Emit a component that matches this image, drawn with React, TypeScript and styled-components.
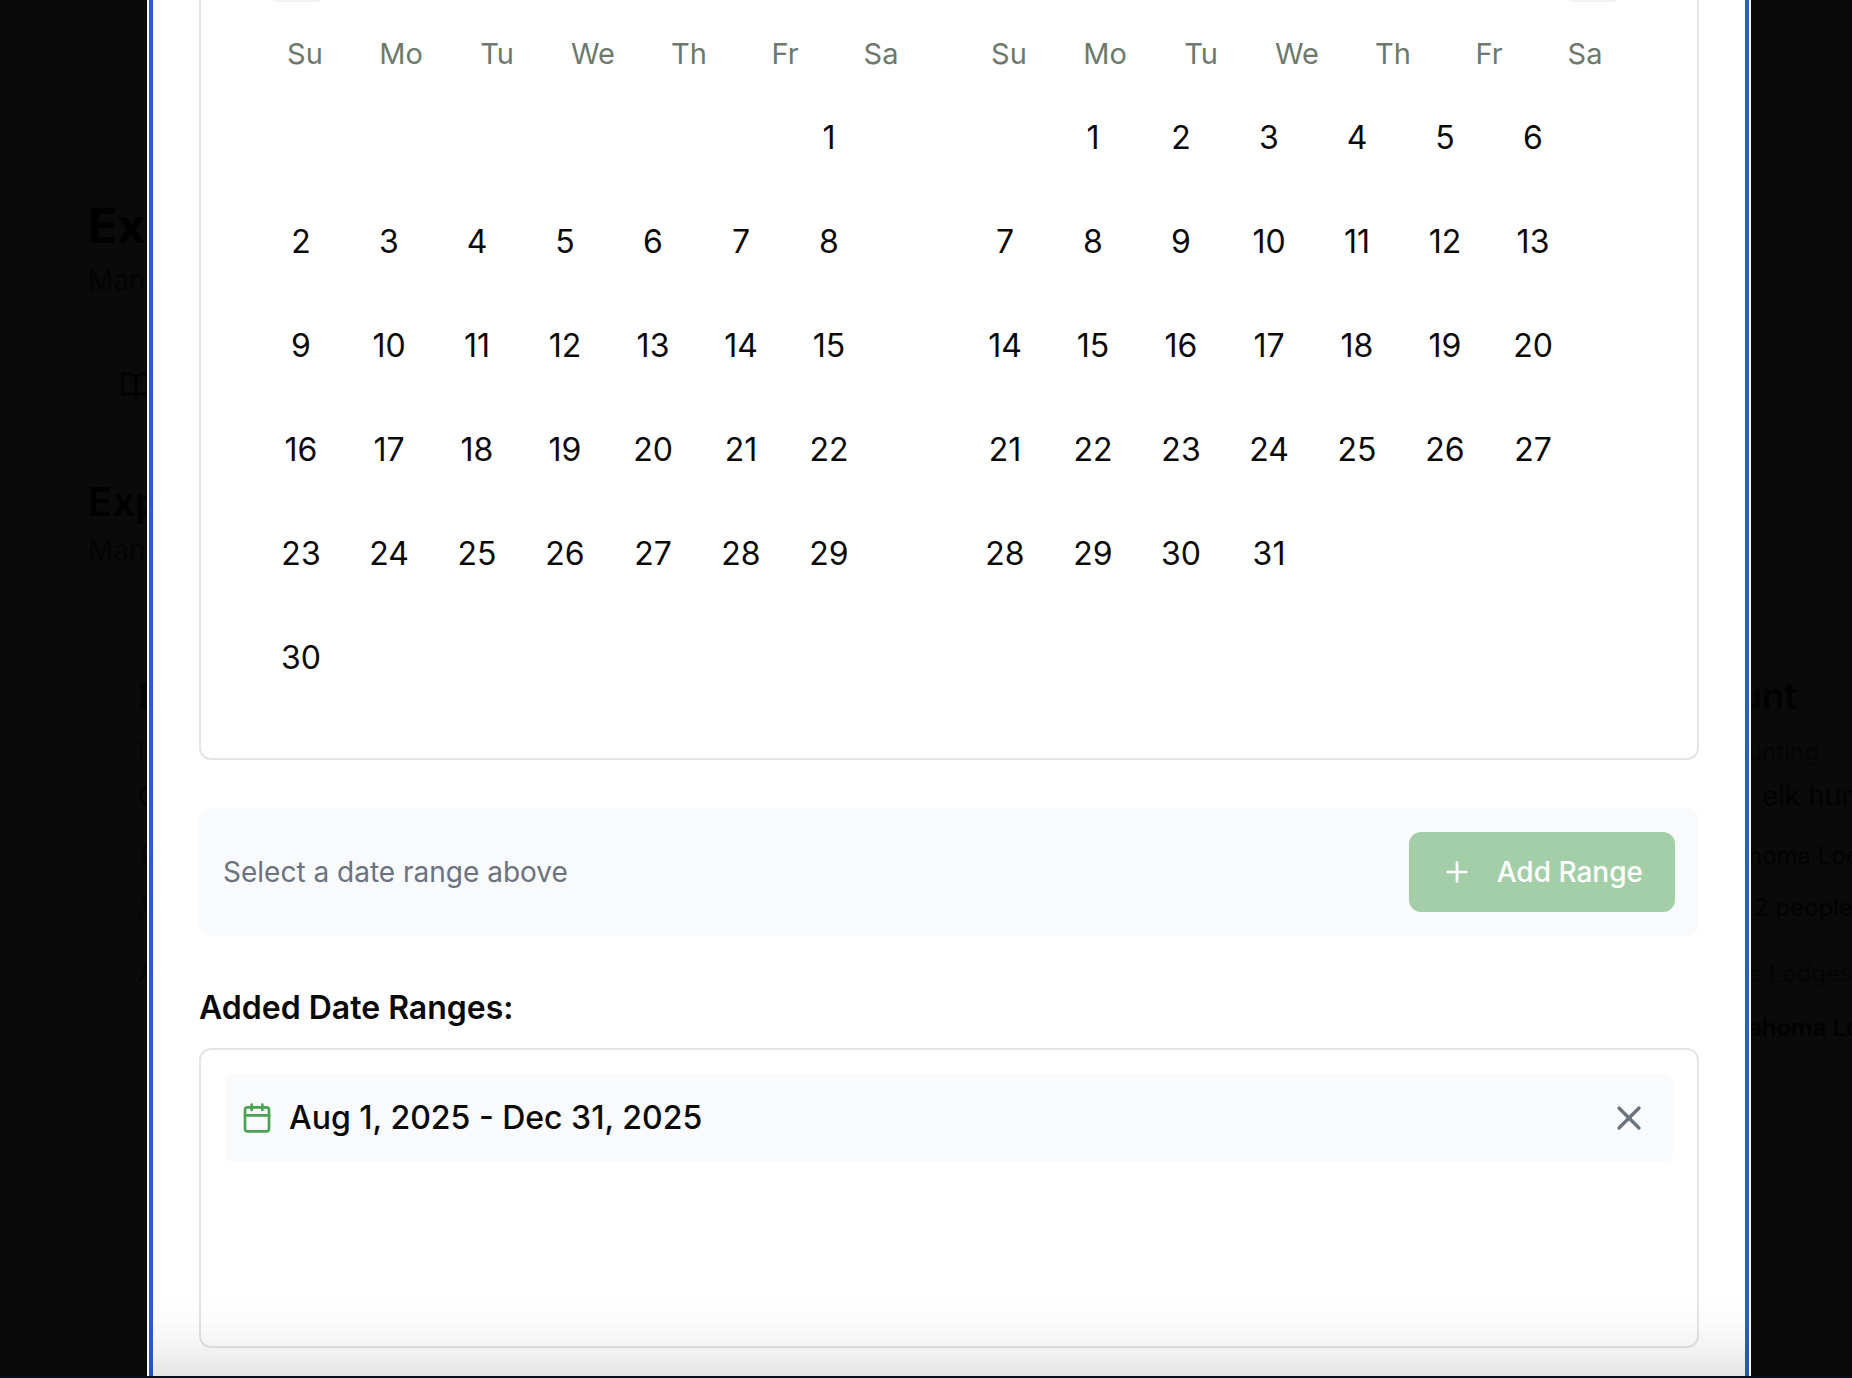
import React from "react";
import styled, { createGlobalStyle } from "styled-components";
import { BookOpen, Calendar, MapPin, Plus, Users, X } from "lucide-react";

const GlobalStyle = createGlobalStyle`
  *, *::before, *::after { box-sizing: border-box; }
  body {
    margin: 0;
    background: #0a0a0a;
    color: #0a0a0a;
    font-family: Inter, "Liberation Sans", sans-serif;
  }
  button { font-family: inherit; border: 0; padding: 0; cursor: pointer; }
  h1, h2, h3, p, ul { margin: 0; padding: 0; }
`;

const Screen = styled.div`
  position: relative;
  height: 100vh;
  display: flex;
  flex-direction: column;
  overflow: hidden;
`;

/* ---------- dimmed page behind the dialog ---------- */

const Page = styled.div`
  flex: 1;
  min-height: 0;
  display: flex;
  color: #000200;
`;

const Rail = styled.div`
  flex: none;
  width: 23px;
  border-right: 1px solid #080808;
`;

const PageBody = styled.main`
  flex: 1;
  min-width: 0;
  padding: 196px 0 0 65px;
  white-space: nowrap;
`;

const PageTitle = styled.h1`
  font-size: 48px;
  line-height: 60px;
  font-weight: 700;
`;

const SectionTitle = styled.h2`
  font-size: 40px;
  line-height: 48px;
  font-weight: 600;
`;

const Lead = styled.p`
  margin-top: 4px;
  font-size: 28px;
  line-height: 40px;
  color: #040404;
`;

const TabRow = styled.div`
  display: flex;
  margin: 54px 0 60px;
  padding: 16px 32px;
  height: 64px;
  color: #020202;
`;

const Cards = styled.div`
  display: flex;
  justify-content: space-between;
  margin-top: 102px;
  padding-left: 50px;
`;

const CardColumn = styled.article`
  width: 112px;
  display: flex;
  flex-direction: column;
`;

const CardTitle = styled.h3`
  font-size: 36px;
  line-height: 48px;
  font-weight: 600;
  color: #000300;
`;

const CardLine = styled.p<{ $size?: number; $indent?: number; $tone?: string; $gap?: number; $bold?: boolean }>`
  display: flex;
  align-items: center;
  font-size: ${(p) => p.$size ?? 24}px;
  font-weight: ${(p) => (p.$bold ? 600 : 400)};
  line-height: 40px;
  height: 40px;
  margin-top: ${(p) => p.$gap ?? 0}px;
  padding-left: ${(p) => p.$indent ?? 0}px;
  color: ${(p) => p.$tone ?? "#020202"};
`;

const Desktop = styled.div`
  flex: none;
  height: 2px;
  background: #03111f;
`;

/* ---------- dialog ---------- */

const Overlay = styled.div`
  position: absolute;
  inset: 0 0 2px;
  display: flex;
  padding: 0 101px 0 147px;
`;

const Dialog = styled.section`
  position: relative;
  flex: 1;
  min-width: 0;
  overflow: hidden;
  border: solid #fff;
  border-width: 0 2px;
  background: #fff;
`;

const DialogBody = styled.div`
  min-height: 100%;
  padding: 0 46px;
  border: solid #2860c5;
  border-width: 0 4px;
`;

const BottomShade = styled.div`
  position: absolute;
  inset: auto 0 0;
  height: 80px;
  pointer-events: none;
  background: linear-gradient(
    to bottom,
    rgba(0, 0, 0, 0) 0%,
    rgba(0, 0, 0, 0.01) 30%,
    rgba(0, 0, 0, 0.04) 60%,
    rgba(0, 0, 0, 0.1) 100%
  );
`;

const CalendarBox = styled.div`
  display: flex;
  justify-content: center;
  padding: 0 8px 56px 0;
  border: 2px solid #e4e4e4;
  border-top: 0;
  border-radius: 0 0 12px 12px;
`;

const CalendarInner = styled.div`
  display: flex;
  flex-direction: column;
`;

const NavRow = styled.div`
  display: flex;
  justify-content: space-between;
  align-items: flex-end;
  height: 2px;
  padding: 0 12px;
  overflow: hidden;
`;

const NavButton = styled.button`
  flex: none;
  width: 56px;
  height: 56px;
  border: 1px solid #f1f1f1;
  border-radius: 8px;
  background: #f5f5f5;
`;

const Months = styled.div`
  display: flex;
  gap: 32px;
  padding-top: 32px;
`;

const Month = styled.table`
  display: block;
  width: 672px;
  border-collapse: collapse;
`;

const WeekdayRow = styled.tr`
  display: flex;
  margin-bottom: 20px;
`;

const Weekday = styled.th`
  width: 96px;
  padding: 0;
  font-size: 29px;
  line-height: 40px;
  font-weight: 400;
  color: #6d796e;
`;

const WeekRow = styled.tr`
  display: flex;

  & + & {
    margin-top: 16px;
  }
`;

const DayCell = styled.td`
  width: 88px;
  height: 88px;
  padding: 0;
`;

const DayButton = styled.button`
  width: 100%;
  height: 100%;
  border-radius: 12px;
  background: transparent;
  color: inherit;
  font-size: 32px;
  line-height: 40px;
`;

const SelectionBar = styled.div`
  display: flex;
  align-items: center;
  justify-content: space-between;
  margin-top: 48px;
  padding: 24px;
  border-radius: 12px;
  background: #f9fafc;
`;

const SelectionHint = styled.p`
  font-size: 28px;
  line-height: 40px;
  color: #6b7280;
`;

const AddButton = styled.button`
  display: flex;
  align-items: center;
  gap: 24px;
  height: 80px;
  padding: 0 32px;
  border-radius: 12px;
  background: #a4cea8;
  color: #fff;
  font-size: 28px;
  line-height: 40px;
  font-weight: 500;
`;

const RangesTitle = styled.h2`
  margin: 48px 0 16px;
  font-size: 32px;
  line-height: 48px;
  font-weight: 600;
`;

const RangeList = styled.ul`
  min-height: 300px;
  padding: 24px;
  border: 2px solid #e4e4e4;
  border-radius: 12px;
  list-style: none;
`;

const RangeItem = styled.li`
  display: flex;
  align-items: center;
  gap: 16px;
  padding: 16px;
  border-radius: 8px;
  background: #f9fafc;
`;

const RangeText = styled.span`
  flex: 1;
  font-size: 32px;
  line-height: 48px;
  font-weight: 500;
`;

const RemoveButton = styled.button`
  display: flex;
  align-items: center;
  justify-content: center;
  width: 56px;
  height: 56px;
  background: transparent;
  color: #6b7280;
`;

const weekdays = ["Su", "Mo", "Tu", "We", "Th", "Fr", "Sa"];

function buildWeeks(firstWeekday: number, dayCount: number) {
  const weeks: (number | null)[][] = [];
  for (let start = 1 - firstWeekday; start <= dayCount; start += 7) {
    weeks.push(
      Array.from({ length: 7 }, (_, i) => {
        const day = start + i;
        return day >= 1 && day <= dayCount ? day : null;
      })
    );
  }
  return weeks;
}

function MonthGrid({ firstWeekday, dayCount }: { firstWeekday: number; dayCount: number }) {
  return (
    <Month>
      <thead>
        <WeekdayRow>
          {weekdays.map((name) => (
            <Weekday key={name} scope="col">{name}</Weekday>
          ))}
        </WeekdayRow>
      </thead>
      <tbody>
        {buildWeeks(firstWeekday, dayCount).map((week, w) => (
          <WeekRow key={w}>
            {week.map((day, i) => (
              <DayCell key={i}>{day && <DayButton type="button">{day}</DayButton>}</DayCell>
            ))}
          </WeekRow>
        ))}
      </tbody>
    </Month>
  );
}

function BackgroundPage() {
  return (
    <Page aria-hidden="true">
      <Rail />
      <PageBody>
        <PageTitle>Ex</PageTitle>
        <Lead>Man</Lead>
        <TabRow>
          <BookOpen size={32} />
        </TabRow>
        <SectionTitle>Exp</SectionTitle>
        <Lead>Man</Lead>
        <Cards>
          <CardColumn>
            <CardTitle>E</CardTitle>
            <CardLine $gap={12} $tone="#060606">E</CardLine>
            <CardLine $size={28} $gap={4}>O</CardLine>
            <CardLine $gap={20} $tone="#050505"><MapPin size={28} /></CardLine>
            <CardLine $gap={12} $tone="#050505"><Users size={28} /></CardLine>
            <CardLine $gap={26} $tone="#040404">A</CardLine>
          </CardColumn>
          <CardColumn>
            <CardTitle>unt</CardTitle>
            <CardLine $gap={12} $indent={8} $tone="#050505">unting</CardLine>
            <CardLine $size={28} $gap={4} $indent={22}>elk hunt</CardLine>
            <CardLine $gap={20} $indent={8}>homa Lodge</CardLine>
            <CardLine $gap={12} $indent={14}>2 people</CardLine>
            <CardLine $gap={26} $indent={8} $tone="#050505">e Lodges</CardLine>
            <CardLine $gap={14} $indent={8} $bold>ahoma Lodge</CardLine>
          </CardColumn>
        </Cards>
      </PageBody>
    </Page>
  );
}

export default function App() {
  return (
    <>
      <GlobalStyle />
      <Screen>
        <BackgroundPage />
        <Desktop />
        <Overlay>
          <Dialog role="dialog" aria-modal="true" aria-label="Date ranges">
            <DialogBody>
              <CalendarBox>
                <CalendarInner>
                  <NavRow>
                    <NavButton type="button" aria-label="Previous month" />
                    <NavButton type="button" aria-label="Next month" />
                  </NavRow>
                  <Months>
                    <MonthGrid firstWeekday={6} dayCount={30} />
                    <MonthGrid firstWeekday={1} dayCount={31} />
                  </Months>
                </CalendarInner>
              </CalendarBox>
              <SelectionBar>
                <SelectionHint>Select a date range above</SelectionHint>
                <AddButton type="button">
                  <Plus size={32} />
                  Add Range
                </AddButton>
              </SelectionBar>
              <RangesTitle>Added Date Ranges:</RangesTitle>
              <RangeList>
                <RangeItem>
                  <Calendar size={32} color="#4aa352" />
                  <RangeText>Aug 1, 2025 - Dec 31, 2025</RangeText>
                  <RemoveButton type="button" aria-label="Remove range">
                    <X size={40} />
                  </RemoveButton>
                </RangeItem>
              </RangeList>
            </DialogBody>
            <BottomShade />
          </Dialog>
        </Overlay>
      </Screen>
    </>
  );
}
